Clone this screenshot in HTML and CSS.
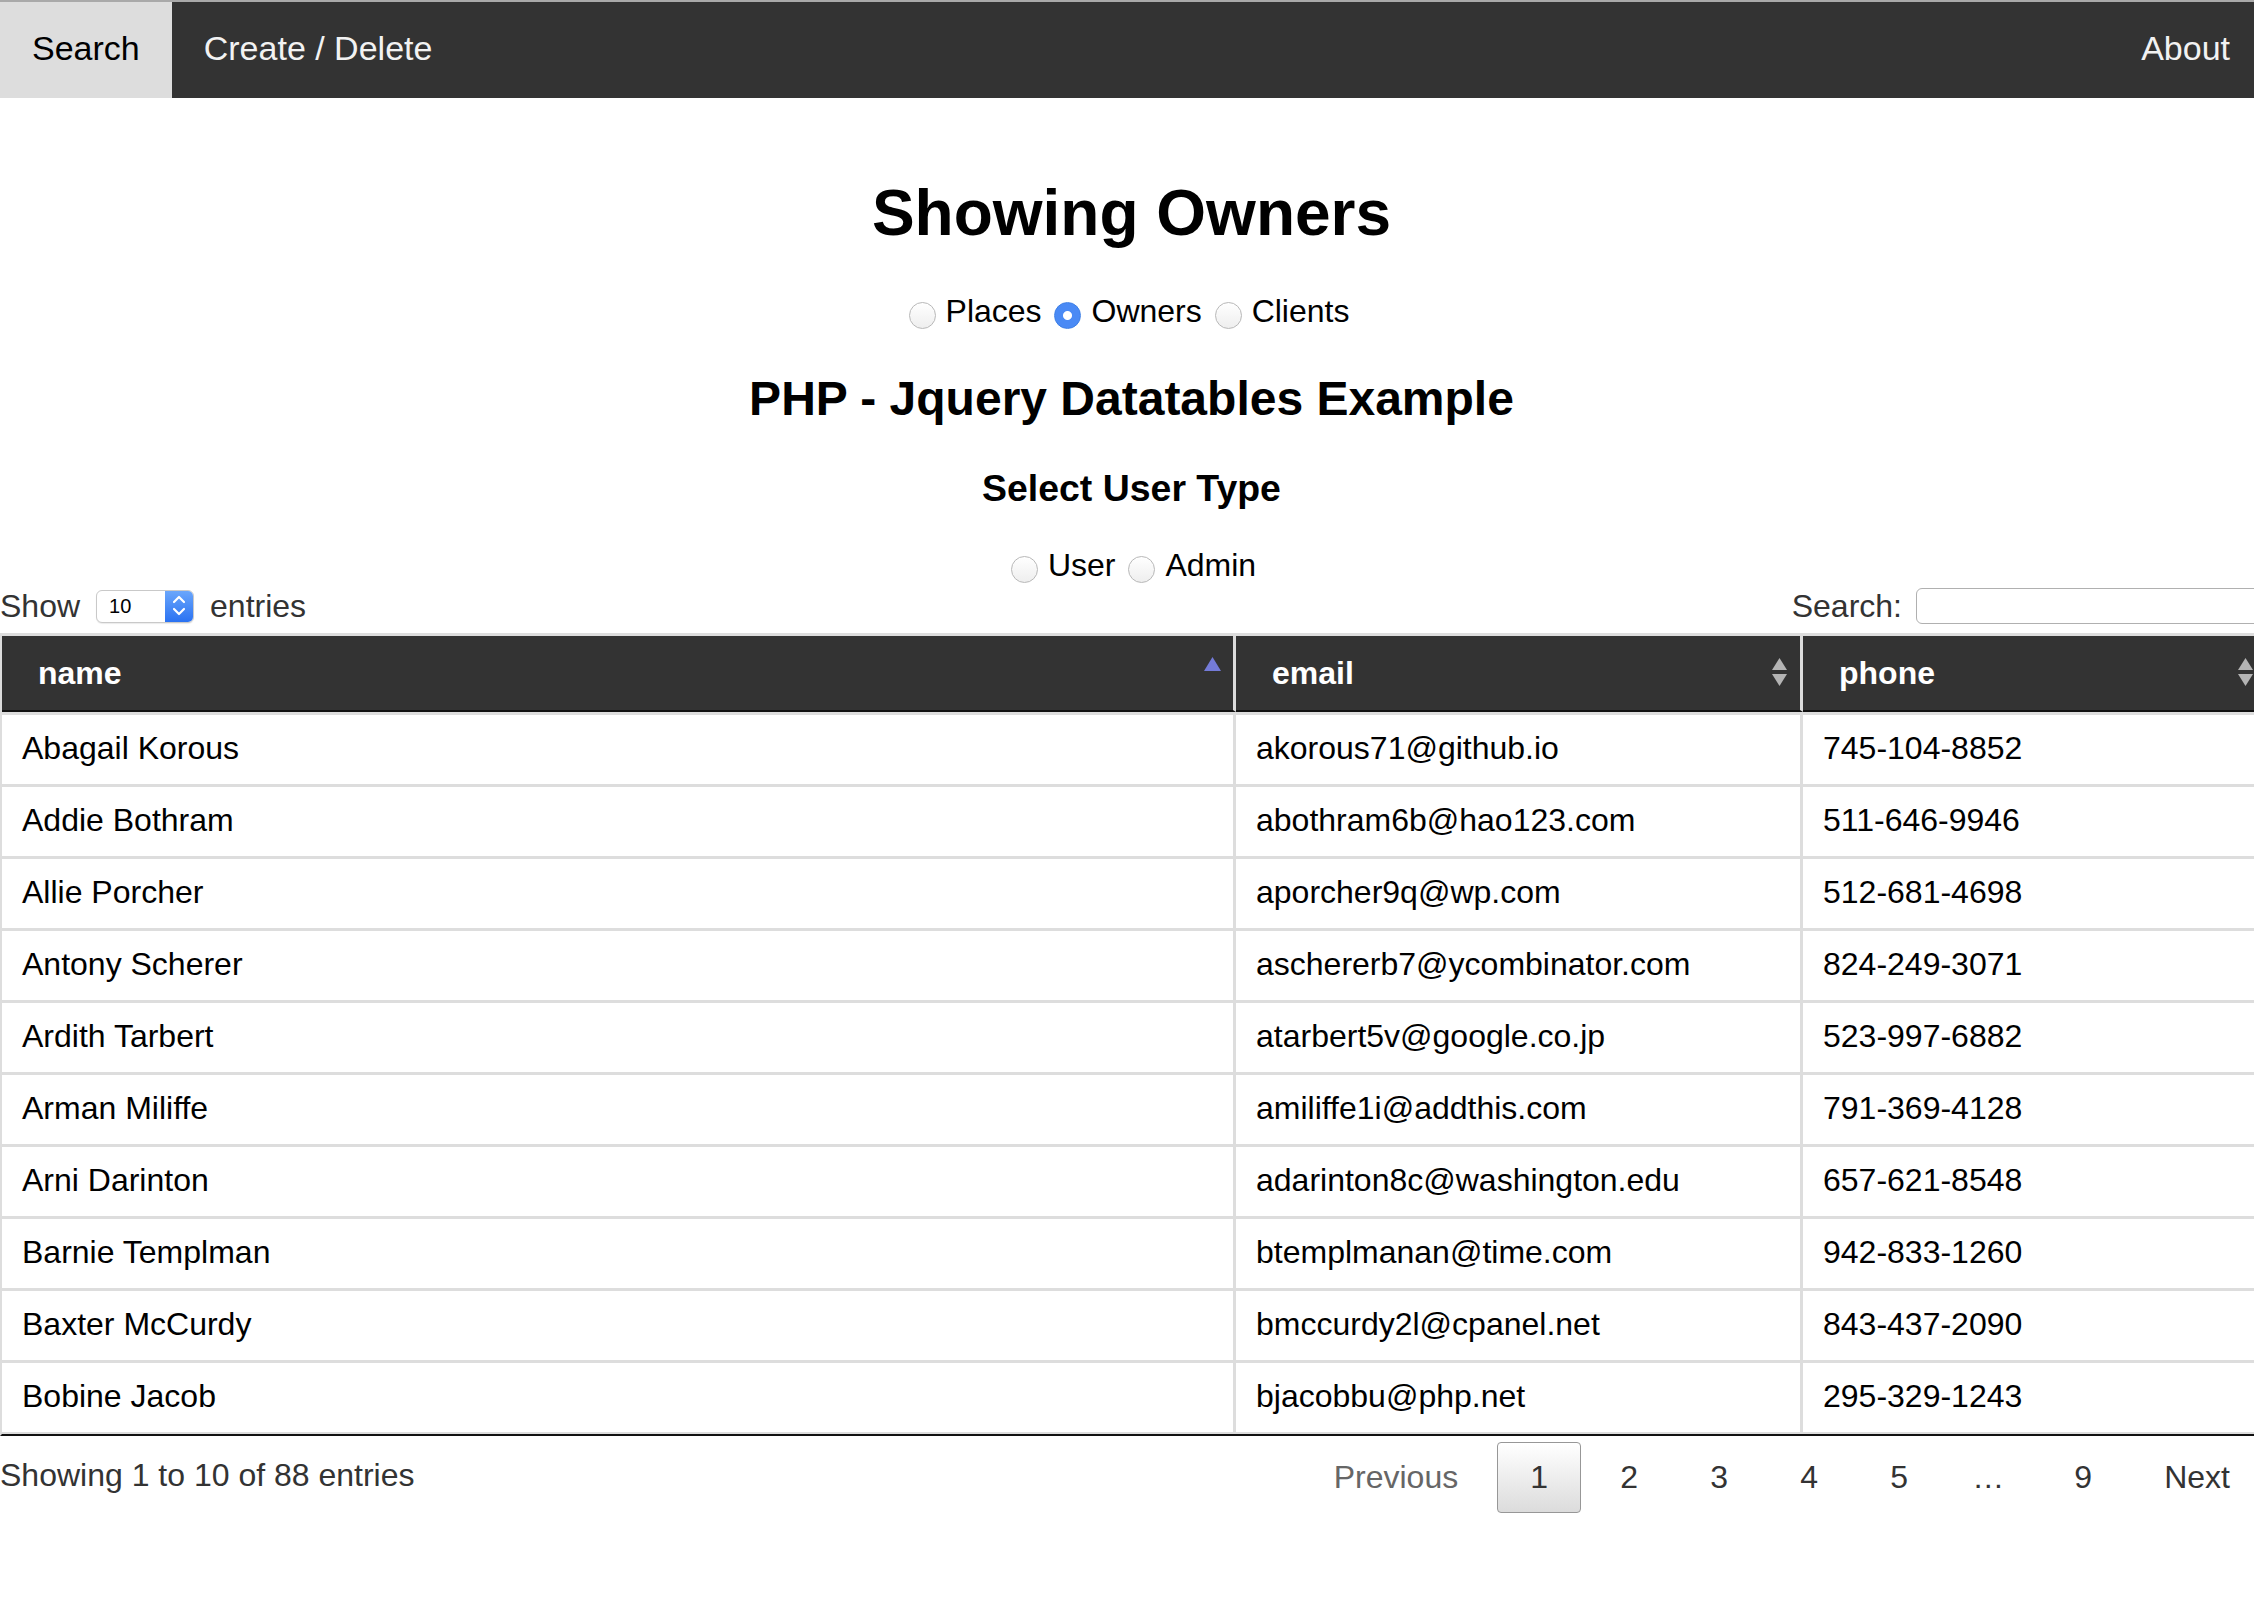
FILE: index.html
```html
<!DOCTYPE html>
<html lang="en">
<head>
<meta charset="utf-8">
<title>Showing Owners</title>
<link rel="stylesheet" href="styles.css">
</head>
<body>
<nav class="topnav">
  <a class="nav-link active" href="#">Search</a>
  <a class="nav-link" href="#">Create / Delete</a>
  <a class="nav-link nav-right" href="#">About</a>
</nav>

<h1 class="title">Showing Owners</h1>
<div class="radio-row first-radios">
  <label><input type="radio" name="kind">Places</label>
  <label><input type="radio" name="kind" checked>Owners</label>
  <label><input type="radio" name="kind">Clients</label>
</div>
<h2 class="subtitle">PHP - Jquery Datatables Example</h2>
<h3 class="usertype">Select User Type</h3>
<div class="radio-row second-radios">
  <label><input type="radio" name="utype">User</label>
  <label><input type="radio" name="utype">Admin</label>
</div>

<div class="dt-wrapper">
  <div class="dt-controls">
    <div class="dt-length">Show
      <span class="fake-select"><span class="sel-val">10</span><span class="sel-btn"><svg width="28" height="33" viewBox="0 0 28 33"><path d="M9 13 L14 8 L19 13" fill="none" stroke="#fff" stroke-width="2.2" stroke-linecap="round" stroke-linejoin="round"/><path d="M9 20 L14 25 L19 20" fill="none" stroke="#fff" stroke-width="2.2" stroke-linecap="round" stroke-linejoin="round"/></svg></span></span>
      entries</div>
    <div class="dt-filter"><label>Search: <span class="search-box"></span></label></div>
  </div>

  <table class="dt-table">
    <thead>
      <tr>
        <th class="col-name">name<svg class="sort" width="17" height="30" viewBox="0 0 17 30"><path d="M0 14 L8.5 0 L17 14 Z" fill="#747bd8"/></svg></th>
        <th class="col-email">email<svg class="sort" width="17" height="30" viewBox="0 0 17 30"><path d="M1 13 L8.5 1 L16 13 Z" fill="#b4b4b4"/><path d="M1 17 L8.5 29 L16 17 Z" fill="#b4b4b4"/></svg></th>
        <th class="col-phone">phone<svg class="sort" width="17" height="30" viewBox="0 0 17 30"><path d="M1 13 L8.5 1 L16 13 Z" fill="#b4b4b4"/><path d="M1 17 L8.5 29 L16 17 Z" fill="#b4b4b4"/></svg></th>
      </tr>
    </thead>
    <tbody>
      <tr><td>Abagail Korous</td><td>akorous71@github.io</td><td>745-104-8852</td></tr>
      <tr><td>Addie Bothram</td><td>abothram6b@hao123.com</td><td>511-646-9946</td></tr>
      <tr><td>Allie Porcher</td><td>aporcher9q@wp.com</td><td>512-681-4698</td></tr>
      <tr><td>Antony Scherer</td><td>aschererb7@ycombinator.com</td><td>824-249-3071</td></tr>
      <tr><td>Ardith Tarbert</td><td>atarbert5v@google.co.jp</td><td>523-997-6882</td></tr>
      <tr><td>Arman Miliffe</td><td>amiliffe1i@addthis.com</td><td>791-369-4128</td></tr>
      <tr><td>Arni Darinton</td><td>adarinton8c@washington.edu</td><td>657-621-8548</td></tr>
      <tr><td>Barnie Templman</td><td>btemplmanan@time.com</td><td>942-833-1260</td></tr>
      <tr><td>Baxter McCurdy</td><td>bmccurdy2l@cpanel.net</td><td>843-437-2090</td></tr>
      <tr><td>Bobine Jacob</td><td>bjacobbu@php.net</td><td>295-329-1243</td></tr>
    </tbody>
  </table>

  <div class="dt-footer">
    <div class="dt-info">Showing 1 to 10 of 88 entries</div>
    <div class="dt-paginate">
      <span class="pg-btn disabled">Previous</span>
      <span class="pg-btn current">1</span>
      <span class="pg-btn">2</span>
      <span class="pg-btn">3</span>
      <span class="pg-btn">4</span>
      <span class="pg-btn">5</span>
      <span class="pg-ellipsis">…</span>
      <span class="pg-btn">9</span>
      <span class="pg-btn">Next</span>
    </div>
  </div>
</div>
</body>
</html>
```

FILE: styles.css
```css
html {
  overflow: hidden;
  background: #fff;
}
body {
  margin: 0;
  font-family: "Liberation Sans", Arial, Helvetica, sans-serif;
  color: #000;
  width: 2263px;
}

/* Top navigation */
.topnav {
  display: flex;
  background: #333;
  border-top: 2px solid #a9a9a9;
}
.nav-link {
  display: block;
  padding: 26px 32px 30px 32px;
  font-size: 34px;
  line-height: 40px;
  color: #f2f2f2;
  text-decoration: none;
}
.nav-link.active {
  background: #ddd;
  color: #000;
}
.nav-right {
  margin-left: auto;
  padding-right: 33px;
}

/* Headings */
.title {
  margin: 78px 0 0;
  font-size: 64px;
  line-height: 74px;
  text-align: center;
  font-weight: bold;
}
.subtitle {
  margin: 42px 0 0;
  font-size: 48px;
  line-height: 56px;
  text-align: center;
  font-weight: bold;
}
.usertype {
  margin: 39px 0 0;
  font-size: 37.44px;
  line-height: 44px;
  text-align: center;
  font-weight: bold;
}

/* Radio rows */
.radio-row {
  text-align: center;
  font-size: 32px;
  line-height: 36px;
  color: #000;
}
.first-radios {
  margin-top: 43px;
  padding-right: 9px;
}
.second-radios { margin-top: 37px; }
.radio-row label {
  display: inline;
}
.radio-row input {
  -webkit-appearance: none;
  appearance: none;
  width: 27px;
  height: 27px;
  margin: 0 10px 0 4px;
  border-radius: 50%;
  border: 1px solid #b8b8b8;
  background: linear-gradient(#ffffff, #eeeeee);
  vertical-align: -7px;
  box-sizing: border-box;
}
.radio-row input:checked {
  border-color: #3d7fe6;
  background: radial-gradient(circle, #ffffff 0 4px, #4a8af5 5px);
}

/* DataTable wrapper */
.dt-wrapper {
  width: 2263px;
}
.dt-controls {
  display: flex;
  justify-content: space-between;
  align-items: center;
  height: 42px;
  margin-top: 2px;
  margin-bottom: 6px;
  font-size: 32px;
  color: #333;
}
.dt-length {
  display: flex;
  align-items: center;
  gap: 16px;
}
.fake-select {
  display: flex;
  width: 98px;
  height: 33px;
  box-sizing: border-box;
  border: 1px solid #c9c9c9;
  border-radius: 6px;
  background: #fff;
  overflow: hidden;
  box-shadow: 0 1px 1px rgba(0,0,0,0.08);
}
.sel-val {
  flex: 1;
  font-size: 20px;
  line-height: 31px;
  padding-left: 12px;
  color: #000;
}
.sel-btn {
  width: 28px;
  background: linear-gradient(#6aa6fb, #2a72f2);
  display: flex;
  align-items: center;
  justify-content: center;
}
.sel-btn svg { display: block; margin-top: -1px; }
.dt-filter {
  margin-right: -6px;
}
.dt-filter label {
  display: flex;
  align-items: center;
  gap: 14px;
}
.search-box {
  display: block;
  width: 353px;
  height: 36px;
  box-sizing: border-box;
  border: 1px solid #b0b0b0;
  border-radius: 6px;
  background: #fff;
}

/* Table */
.dt-table {
  width: 2269px;
  table-layout: fixed;
  border-collapse: separate;
  border-spacing: 0;
  border-left: 2px solid #ddd;
  border-bottom: 2px solid #111;
  font-size: 32px;
}
.dt-table th {
  position: relative;
  box-sizing: border-box;
  background: #333;
  color: #fff;
  text-align: left;
  font-weight: bold;
  padding: 19px 36px;
  line-height: 36px;
  border-top: 3px solid #ddd;
  border-right: 3px solid #ddd;
  border-bottom: 2px solid #111;
}
.col-name { width: 1234px; }
.col-email { width: 567px; }
.col-phone { width: 466px; }
.sort {
  position: absolute;
  right: 12px;
  top: 50%;
  margin-top: -16px;
}
.dt-table td {
  padding: 15px 20px 17px;
  line-height: 37px;
  color: #000;
  border-top: 3px solid #ddd;
  border-right: 3px solid #ddd;
  white-space: nowrap;
}
.dt-table tbody tr:last-child td {
  border-bottom: 2px solid #ddd;
}

/* Footer */
.dt-footer {
  display: flex;
  justify-content: space-between;
  align-items: center;
  margin-top: 6px;
  font-size: 32px;
  color: #333;
}
.dt-info {
  line-height: 37px;
  margin-top: -4px;
}
.dt-paginate {
  display: flex;
  align-items: center;
}
.pg-btn {
  display: block;
  min-width: 18px;
  text-align: center;
  padding: 16px 32px;
  line-height: 37px;
  margin-left: 6px;
  border: 1px solid transparent;
  border-radius: 4px;
  color: #333;
}
.pg-btn.disabled { color: #666; }
.pg-btn.current {
  border: 1px solid #979797;
  background: linear-gradient(#ffffff, #dcdcdc);
  color: #333;
}
.pg-ellipsis {
  display: block;
  padding: 0 31px;
  color: #333;
}
```
